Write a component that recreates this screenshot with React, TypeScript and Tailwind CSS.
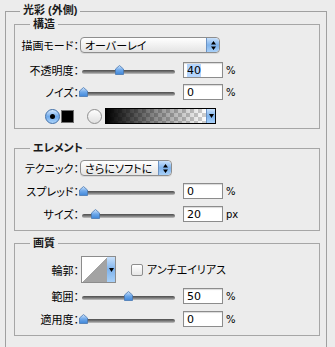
import React from 'react';

const font = "font-['Noto_Sans_CJK_JP','Noto_Sans',sans-serif] [font-feature-settings:'palt']";
const titleFont = "font-['Liberation_Sans','Noto_Sans_CJK_JP',sans-serif]";

function Label({ children }: { children: React.ReactNode }) {
  return <span className="w-[64px] shrink-0 text-right text-[11px] leading-[16px] text-black">{children}：</span>;
}

function Stepper({ single }: { single?: boolean }) {
  return (
    <div className="flex h-full w-[13px] items-center justify-center rounded-r-[4px] border-l border-[#6c93c4] bg-gradient-to-b from-[#c9e1fb] via-[#7fb3ec] to-[#a8d0f8]">
      {single ? (
        <svg width="5" height="4" viewBox="0 0 5 4"><path d="M0 0h5L2.5 4z" fill="#000" /></svg>
      ) : (
        <svg width="5" height="9" viewBox="0 0 5 9"><path d="M2.5 0L5 3.5H0zM0 5.5h5L2.5 9z" fill="#000" /></svg>
      )}
    </div>
  );
}

function Select({ value, width }: { value: string; width: string }) {
  return (
    <div className={`ml-[1px] flex h-[16px] ${width} items-stretch overflow-hidden rounded-[4px] border border-[#8e8e8e] bg-gradient-to-b from-white to-[#e4e4e4] shadow-[0_1px_0_rgba(0,0,0,0.08)]`}>
      <span className="flex-1 pl-[4px] text-[11px] leading-[14px] text-black">{value}</span>
      <Stepper />
    </div>
  );
}

function Slider({ pct }: { pct: number }) {
  return (
    <div className="relative ml-[3px] flex h-[16px] w-[93px] items-center">
      <div className="mt-[3px] h-[4px] w-full rounded-full bg-gradient-to-b from-[#4d4d4d] via-[#7a7a7a] to-[#c4c4c4]" />
      <svg
        className="absolute top-[3px]"
        style={{ left: `${pct * 91 - 3.5}px` }}
        width="9"
        height="10"
        viewBox="0 0 9 10"
      >
        <defs>
          <linearGradient id="thumb" x1="0" y1="0" x2="0" y2="1">
            <stop offset="0" stopColor="#cfe4fb" />
            <stop offset="0.5" stopColor="#6ea8ea" />
            <stop offset="1" stopColor="#3f86d8" />
          </linearGradient>
        </defs>
        <path d="M4.5 0.5L8.5 4V9.5H0.5V4Z" fill="url(#thumb)" stroke="#4a79b3" strokeWidth="0.8" />
      </svg>
    </div>
  );
}

function NumInput({ value, unit, selected }: { value: string; unit: string; selected?: boolean }) {
  return (
    <div className="ml-[8px] flex items-center">
      <div className="flex h-[16px] w-[40px] items-center border border-[#8c8c8c] bg-white pl-[3px] shadow-[inset_0_1px_1px_rgba(0,0,0,0.15)]">
        <span className={`font-['DejaVu_Sans',sans-serif] text-[11px] leading-[13px] text-black ${selected ? 'bg-[#b5d5fd]' : ''}`}>{value}</span>
      </div>
      <span className="ml-[3px] font-['DejaVu_Sans',sans-serif] text-[10px] text-black">{unit}</span>
    </div>
  );
}

function SliderRow({ label, pct, value, unit, selected, className }: { label: string; pct: number; value: string; unit: string; selected?: boolean; className: string }) {
  return (
    <div className={`flex h-[16px] items-center ${className}`}>
      <Label>{label}</Label>
      <Slider pct={pct} />
      <NumInput value={value} unit={unit} selected={selected} />
    </div>
  );
}

function Radio({ checked }: { checked?: boolean }) {
  return checked ? (
    <div className="flex h-[15px] w-[15px] items-center justify-center rounded-full border border-[#3f6fa8] bg-gradient-to-b from-[#d6e9fd] via-[#6fa9ea] to-[#a9d2fa]">
      <div className="h-[5px] w-[5px] rounded-full bg-black" />
    </div>
  ) : (
    <div className="h-[15px] w-[15px] rounded-full border border-[#8f8f8f] bg-gradient-to-b from-[#fdfdfd] to-[#e0e0e0]" />
  );
}

// group box: title sits in the top border line
function Group({ title, className, bodyClass, children }: { title: string; className?: string; bodyClass: string; children: React.ReactNode }) {
  return (
    <div className={`flex flex-col ${className ?? ''}`}>
      <div className="flex h-[13px] items-end">
        <div className="h-[7px] w-[16px] shrink-0 border-l border-t border-[#a6a6a6]" />
        <span className={`ml-[3px] mr-[3px] shrink-0 self-start whitespace-nowrap text-[11px] font-bold leading-[13px] text-[#1a1a1a] ${titleFont}`}>{title}</span>
        <div className="h-[7px] grow border-r border-t border-[#a6a6a6]" />
      </div>
      <div className={`flex flex-col border-x border-b border-[#a6a6a6] ${bodyClass}`}>{children}</div>
    </div>
  );
}

export default function App() {
  return (
    <div className={`h-[347px] overflow-hidden bg-[#ececec] pl-[5px] pr-[8px] pt-[4px] ${font}`}>
      <div className="flex h-[14px] items-end">
        <div className="h-[7px] w-[15px] shrink-0 border-l border-t border-[#a0a0a0]" />
        <span className={`ml-[3px] mr-[3px] shrink-0 self-start whitespace-nowrap text-[11px] font-bold leading-[13px] text-[#1a1a1a] ${titleFont}`}>光彩 (外側)</span>
        <div className="h-[7px] grow border-r border-t border-[#a0a0a0]" />
      </div>
      <div className="border-x border-[#a0a0a0] pb-[30px] pl-[8px] pr-[6px]">
        <Group title="構造" bodyClass="pb-[4px]">
          <div className="mt-[6px] flex h-[16px] items-center">
            <Label>描画モード</Label>
            <Select value="オーバーレイ" width="w-[140px]" />
          </div>
          <SliderRow className="mt-[9px]" label="不透明度" pct={0.4} value="40" unit="%" selected />
          <SliderRow className="mt-[6px]" label="ノイズ" pct={0} value="0" unit="%" />
          <div className="mt-[8px] flex h-[16px] items-center pl-[30px]">
            <Radio checked />
            <div className="ml-[1px] h-[13px] w-[13px] border border-[#707070] bg-black" />
            <div className="ml-[13px]">
              <Radio />
            </div>
            <div className="ml-[3px] flex h-[16px] w-[111px] border border-black">
              <div className="h-full flex-1 bg-[conic-gradient(#cfcfcf_25%,#ffffff_0_50%,#cfcfcf_0_75%,#ffffff_0)] bg-[length:8px_8px]">
                <div className="h-full w-full bg-gradient-to-r from-black via-[rgba(0,0,0,0.45)] to-transparent" />
              </div>
              <div className="flex w-[9px] items-center justify-center border-l border-[#6c93c4] bg-gradient-to-b from-[#c9e1fb] via-[#7fb3ec] to-[#a8d0f8]">
                <svg width="5" height="4" viewBox="0 0 5 4"><path d="M0 0h5L2.5 4z" fill="#000" /></svg>
              </div>
            </div>
          </div>
        </Group>

        <Group title="エレメント" className="mt-[13px]" bodyClass="pb-[8px]">
          <div className="mt-[5px] flex h-[16px] items-center">
            <Label>テクニック</Label>
            <Select value="さらにソフトに" width="w-[92px]" />
          </div>
          <SliderRow className="mt-[7px]" label="スプレッド" pct={0} value="0" unit="%" />
          <SliderRow className="mt-[7px]" label="サイズ" pct={0.14} value="20" unit="px" />
        </Group>

        <Group title="画質" className="mt-[6px]" bodyClass="pb-[8px]">
          <div className="mt-[6px] flex h-[27px] items-center">
            <Label>輪郭</Label>
            <div className="ml-[2px] flex h-[27px] border border-[#8c8c8c]">
              <div className="h-full w-[25px] bg-[linear-gradient(to_top_left,#a3a3a3_50%,#ffffff_50%)]" />
              <div className="flex w-[8px] items-center justify-center bg-gradient-to-b from-[#c9e1fb] via-[#7fb3ec] to-[#a8d0f8]">
                <svg width="5" height="4" viewBox="0 0 5 4"><path d="M0 0h5L2.5 4z" fill="#000" /></svg>
              </div>
            </div>
            <div className="ml-[15px] h-[12px] w-[12px] rounded-[2px] border border-[#8e8e8e] bg-gradient-to-b from-white to-[#e6e6e6]" />
            <span className="ml-[4px] text-[11px] text-black">アンチエイリアス</span>
          </div>
          <SliderRow className="mt-[5px]" label="範囲" pct={0.5} value="50" unit="%" />
          <SliderRow className="mt-[7px]" label="適用度" pct={0} value="0" unit="%" />
        </Group>
      </div>
    </div>
  );
}
